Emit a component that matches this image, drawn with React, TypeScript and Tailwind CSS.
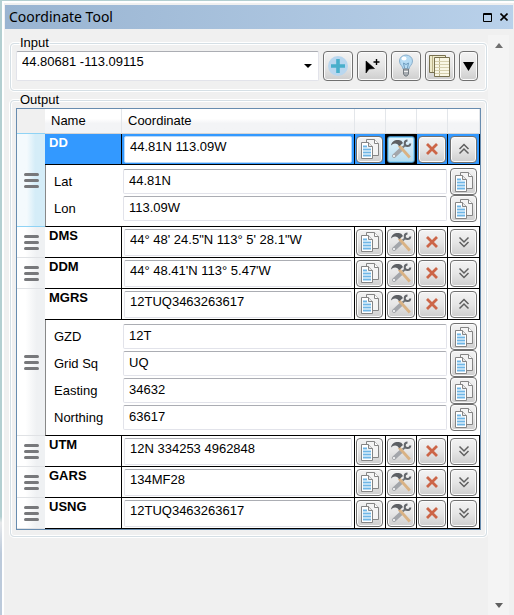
import React from "react";

const BTN =
  "flex shrink-0 items-center justify-center rounded-[4px] border border-[#707070] bg-linear-to-b from-[#f3f3f3] from-0% via-[#e6e6e6] via-50% to-[#cecece] to-100% shadow-[inset_0_0_0_1px_#fbfbfb]";

function CopyIcon() {
  return (
    <svg width="20" height="22" viewBox="0 0 20 22" aria-hidden="true">
      <path d="M6.500 1.500h8l4 4v12h-12z" fill="#f4f4f4" stroke="#858585" />
      <path d="M14.500 1.500v4h4" fill="#fff" stroke="#858585" />
      <path d="M1.500 4.500h7l4 4v12h-11z" fill="#fff" stroke="#858585" />
      <path d="M8.500 4.500v4h4" fill="#e8e8e8" stroke="#858585" />
      <path d="M3 8.500h4M3 11.500h8M3 14.500h8M3 17.500h8" stroke="#6fb6e6" strokeWidth="2" />
      <path d="M3 10h8M3 13h8M3 16h8" stroke="#c9e5f7" />
    </svg>
  );
}

function ToolsIcon() {
  return (
    <svg width="22" height="22" viewBox="0 0 22 22" aria-hidden="true">
      <path d="M4 18 11 11.500" stroke="#a3a6ab" strokeWidth="4" strokeLinecap="round" />
      <circle cx="4" cy="18" r="1" fill="#fff" />
      <path d="m12.500 9.500 2.500-2" stroke="#75787c" strokeWidth="2" />
      <path d="M17.500 2.500a2.800 2.800 0 1 0 2.800 3" fill="none" stroke="#63666a" strokeWidth="2" />
      <path d="M9 7.500 19.800 19.500" stroke="#d9b284" strokeWidth="2.800" />
      <path d="M1 7.500C1.500 4 4 2 8 2c1.500 0 2 .7 3.300.7l1.700 2.300-3.800 3.300-1.700-2C5.500 4.800 3 5.300 1 7.500z" fill="#5c5f63" />
    </svg>
  );
}

function DeleteIcon() {
  return (
    <svg width="14" height="14" viewBox="0 0 14 14" aria-hidden="true">
      <path d="m2 2 10 10M12 2 2 12" stroke="#cc6547" strokeWidth="2.800" />
    </svg>
  );
}

function Chevrons({ up }: { up?: boolean }) {
  return (
    <svg width="12" height="12" viewBox="0 0 12 12" aria-hidden="true" className={up ? "" : "rotate-180"}>
      <path d="m1.500 6 4.500-4.500L10.500 6M1.500 10.500 6 6l4.500 4.500" fill="none" stroke="#606060" strokeWidth="1.500" />
    </svg>
  );
}

function Field({ value, label, selected }: { value: string; label: string; selected?: boolean }) {
  return (
    <input
      aria-label={label}
      defaultValue={value}
      className={`block h-[27px] w-full rounded-[2px] border bg-white px-[5px] pb-[5px] outline-none ${
        selected ? "border-[#b8d8f8]" : "border-[#e2e3ea] border-t-[#abadb3]"
      }`}
    />
  );
}

function Grip() {
  return (
    <div className="flex flex-col items-center gap-[3px]" aria-hidden="true">
      <span className="h-[3px] w-[15px] rounded-full bg-[#77787b]" />
      <span className="h-[3px] w-[15px] rounded-full bg-[#77787b]" />
      <span className="h-[3px] w-[15px] rounded-full bg-[#77787b]" />
    </div>
  );
}

type Row = { name: string; value: string; selected?: boolean; parts?: [string, string][] };

const rows: Row[] = [
  { name: "DD", value: "44.81N 113.09W", selected: true, parts: [["Lat", "44.81N"], ["Lon", "113.09W"]] },
  { name: "DMS", value: "44° 48' 24.5\"N 113° 5' 28.1\"W" },
  { name: "DDM", value: "44° 48.41'N 113° 5.47'W" },
  {
    name: "MGRS",
    value: "12TUQ3463263617",
    parts: [["GZD", "12T"], ["Grid Sq", "UQ"], ["Easting", "34632"], ["Northing", "63617"]],
  },
  { name: "UTM", value: "12N 334253 4962848" },
  { name: "GARS", value: "134MF28" },
  { name: "USNG", value: "12TUQ3463263617" },
];

function OutputRow({ row }: { row: Row }) {
  const { name, value, selected, parts } = row;
  const base = "h-[31px] border-b border-r border-black p-0";
  const cell = `${base} ${selected ? "bg-[#3399ff]" : "bg-white"}`;
  return (
    <tbody>
      <tr>
        <td
          rowSpan={parts ? 2 : 1}
          className={`border-b p-0 align-middle ${
            selected
              ? "border-[#8fd3f5] bg-linear-to-r from-[#f4fafd] from-35% to-[#d5edf8] to-65%"
              : "border-[#e0e2e5] bg-linear-to-r from-white from-30% to-[#eff1f3] to-70%"
          }`}
        >
          <Grip />
        </td>
        <th
          scope="row"
          className={`${cell} pl-1 text-left align-top leading-[17px] font-bold ${selected ? "text-white" : ""}`}
        >
          {name}
        </th>
        <td className={`${cell} px-[2px]`}>
          <Field value={value} label={`${name} coordinate`} selected={selected} />
        </td>
        <td className={cell}>
          <button type="button" aria-label={`Copy ${name}`} className={`${BTN} ml-px h-[27px] w-[27px]`}>
            <CopyIcon />
          </button>
        </td>
        <td className={`${base} ${selected ? "bg-black" : "bg-white"}`}>
          <button
            type="button"
            aria-label={`Format ${name}`}
            className={
              selected
                ? "mx-auto flex h-[27px] w-7 items-center justify-center rounded-[3px] border border-[#3c7fb1] bg-linear-to-b from-[#e5f4fc] to-[#b5dcf0] shadow-[inset_0_0_0_1px_#8ed4f4]"
                : `${BTN} mx-auto h-[27px] w-7`
            }
          >
            <ToolsIcon />
          </button>
        </td>
        <td className={cell}>
          <button type="button" aria-label={`Remove ${name}`} className={`${BTN} mx-auto h-[27px] w-7`}>
            <DeleteIcon />
          </button>
        </td>
        <td className={cell}>
          <button
            type="button"
            aria-label={`Toggle ${name} details`}
            aria-expanded={!!parts}
            className={`${BTN} mx-auto h-[27px] w-[27px]`}
          >
            <Chevrons up={!!parts} />
          </button>
        </td>
      </tr>
      {parts && (
        <tr>
          <td colSpan={6} className="border-b border-l border-b-black border-l-[#888] bg-white pt-[3px] pr-[3px] pb-1 pl-2">
            {parts.map(([label, text]) => (
              <div key={label} className="flex h-[27px] items-center">
                <label htmlFor={`${name}-${label}`} className="w-[69px] shrink-0">
                  {label}
                </label>
                <input
                  id={`${name}-${label}`}
                  defaultValue={text}
                  className="mr-[3px] h-[25px] min-w-0 flex-1 rounded-[2px] border border-[#e2e3ea] border-t-[#abadb3] bg-white px-[5px] pb-[2px] outline-none"
                />
                <button type="button" aria-label={`Copy ${label}`} className={`${BTN} h-[27px] w-[27px]`}>
                  <CopyIcon />
                </button>
              </div>
            ))}
          </td>
        </tr>
      )}
    </tbody>
  );
}

const GROUP = "min-w-0 rounded-[4px] border border-[#d5dfe5] px-[5px] shadow-[inset_0_0_0_1px_white,0_0_0_1px_white]";

export default function App() {
  return (
    <div className="flex min-h-screen bg-linear-to-b from-[#b3cfd1] from-84% via-[#e6e8ea] via-85% to-[#bccadb] to-90% pt-px pl-[2px] font-['Liberation_Sans',Arial,sans-serif] text-[13px] leading-4 text-black">
      <main className="flex min-w-0 flex-1 flex-col border-t-2 border-l-2 border-white bg-[#f0f0f0] pt-[2px] pl-px">
        <header className="mr-px flex h-6 items-center bg-linear-to-r from-[#99b4d1] to-[#b9d1ea] pr-[5px] pl-1">
          <h1 className="flex-1 font-['Noto_Sans',sans-serif] text-sm leading-5">Coordinate Tool</h1>
          <button type="button" aria-label="Maximize" className="mr-2">
            <svg width="9" height="9" viewBox="0 0 9 9" aria-hidden="true">
              <path d="M.5.5h8v8h-8zM0 1.500h9" fill="none" stroke="#000" />
            </svg>
          </button>
          <button type="button" aria-label="Close">
            <svg width="8" height="8" viewBox="0 0 8 8" aria-hidden="true">
              <path d="m.5.5 7 7M7.500.5l-7 7" stroke="#000" strokeWidth="1.600" />
            </svg>
          </button>
        </header>

        <div className="flex flex-1 pt-[6px] pr-[5px] pl-[5px]">
          <div className="min-w-0 flex-1 pr-px pb-4">
            <fieldset className={`${GROUP} pb-[9px]`}>
              <legend className="ml-[3px] px-px">
                <label htmlFor="coordinate-input">Input</label>
              </legend>
              <div className="flex items-center gap-1 pr-[3px]">
                <div className="flex h-[30px] min-w-0 flex-1 rounded-[2px] border border-[#e2e3ea] border-t-[#abadb3] bg-white">
                  <input
                    id="coordinate-input"
                    defaultValue="44.80681 -113.09115"
                    className="min-w-0 flex-1 pb-[9px] pl-[5px] outline-none"
                  />
                  <button type="button" aria-label="Recent inputs" className="flex w-5 items-center justify-center">
                    <svg width="8" height="4" viewBox="0 0 8 4" aria-hidden="true">
                      <path d="M0 0h8L4 4z" />
                    </svg>
                  </button>
                </div>
                <button type="button" aria-label="Add point" className={`${BTN} h-[30px] w-[30px]`}>
                  <svg width="22" height="22" viewBox="0 0 22 22" aria-hidden="true">
                    <circle cx="11" cy="11" r="10" fill="#b9d7ef" />
                    <path d="M11 4v14M4 11h14" stroke="#48afcb" strokeWidth="3.600" />
                  </svg>
                </button>
                <button type="button" aria-label="Map point tool" className={`${BTN} h-[30px] w-[30px]`}>
                  <svg width="16" height="16" viewBox="0 0 16 16" aria-hidden="true">
                    <path d="M2 3v12l3-4 5.500-.5z" stroke="#000" strokeWidth=".6" />
                    <path d="M12.500 1v6M9.500 4h6" stroke="#000" strokeWidth="1.400" />
                  </svg>
                </button>
                <button type="button" aria-label="Flash point" className={`${BTN} h-[30px] w-[30px]`}>
                  <svg width="16" height="24" viewBox="0 0 16 24" aria-hidden="true">
                    <path d="M5 15C5 12 1.500 11 1.500 7a6.500 6 0 0 1 13 0c0 4-3.500 5-3.500 8z" fill="#b7dcf4" stroke="#88aecb" />
                    <path d="M6.500 14 5.500 9 8 10.500 10.500 9l-1 5" fill="none" stroke="#6d9cbf" />
                    <ellipse cx="6" cy="4.500" rx="2.500" ry="2" fill="#fff" />
                    <path d="M5.500 15h5v5l-1.500 2H7l-1.500-2z" fill="#a8adb2" stroke="#737a80" />
                    <path d="M6 17.500h4" stroke="#eee" />
                  </svg>
                </button>
                <button type="button" aria-label="Copy all" className={`${BTN} h-[30px] w-[30px]`}>
                  <svg width="24" height="24" viewBox="0 0 24 24" aria-hidden="true">
                    <path d="M1.500 1.500h16v17h-16z" fill="#eeeacb" stroke="#77704f" />
                    <path d="M4.500 2v16" stroke="#bdb58b" />
                    <path d="M6.500 3.500h15v19h-15z" fill="#f9f7e6" stroke="#77704f" />
                    <path d="M11.500 4v18" stroke="#bdb58b" />
                    <path d="M7 7.500h14M7 10.500h14M7 13.500h14M7 16.500h14M7 19.500h14" stroke="#d5cfae" />
                  </svg>
                </button>
                <button type="button" aria-label="More actions" className={`${BTN} h-[30px] w-[19px]`}>
                  <svg width="11" height="9" viewBox="0 0 11 9" aria-hidden="true">
                    <path d="M0 0h11L5.500 9z" />
                  </svg>
                </button>
              </div>
            </fieldset>

            <fieldset className={`${GROUP} mt-px pb-[6px]`}>
              <legend className="ml-[3px] px-px">Output</legend>
              <table className="w-full table-fixed border-separate border-spacing-0 border border-[#688caf] bg-white">
                <colgroup>
                  <col className="w-7" />
                  <col className="w-[77px]" />
                  <col />
                  <col className="w-[31px]" />
                  <col className="w-[31px]" />
                  <col className="w-[31px]" />
                  <col className="w-8" />
                </colgroup>
                <thead>
                  <tr className="text-left">
                    <td className="h-[25px] border-b border-[#8fd3f5] bg-[#f0f0f0] p-0" />
                    {["Name", "Coordinate", "", "", "", ""].map((title, i) => (
                      <th
                        key={i}
                        scope="col"
                        className="border-r border-b border-r-[#e3e6ea] border-b-[#d5d5d5] bg-linear-to-b from-white from-40% to-[#f3f4f6] to-60% p-0 pl-[6px] font-normal"
                      >
                        {title}
                      </th>
                    ))}
                  </tr>
                </thead>
                {rows.map((row) => (
                  <OutputRow key={row.name} row={row} />
                ))}
              </table>
            </fieldset>
          </div>

          <div className="flex w-[21px] shrink-0 flex-col items-center justify-between bg-[#f4f4f4] pt-2 pb-[7px]">
            <button type="button" aria-label="Scroll up">
              <svg width="8" height="5" viewBox="0 0 8 5" aria-hidden="true">
                <path d="M0 5h8L4 0z" fill="#707070" />
              </svg>
            </button>
            <button type="button" aria-label="Scroll down">
              <svg width="8" height="5" viewBox="0 0 8 5" aria-hidden="true">
                <path d="M0 0h8L4 5z" fill="#606060" />
              </svg>
            </button>
          </div>
        </div>
      </main>
    </div>
  );
}
